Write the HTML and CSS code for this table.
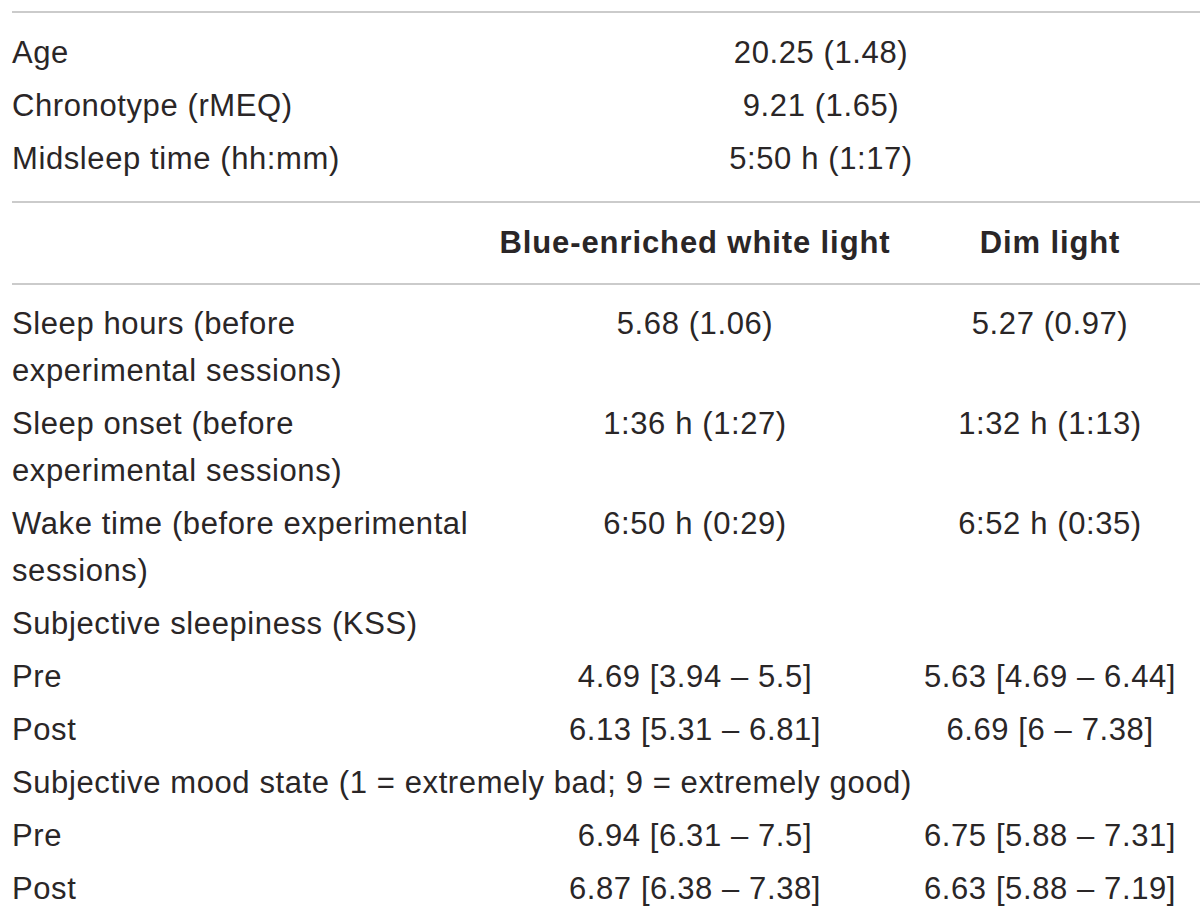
FILE: index.html
```html
<!DOCTYPE html>
<html lang="en">
<head>
    <meta charset="UTF-8">
    <meta name="viewport" content="width=device-width, initial-scale=1.0">
    <title>Participant characteristics</title>
    <link rel="stylesheet" href="styles.css">
</head>
<body>
    <table class="data-table">
        <colgroup>
            <col class="col-label">
            <col class="col-blue">
            <col class="col-dim">
        </colgroup>
        <tbody class="summary">
            <tr>
                <td>Age</td>
                <td class="value wide" colspan="2">20.25 (1.48)</td>
            </tr>
            <tr>
                <td>Chronotype (rMEQ)</td>
                <td class="value wide" colspan="2">9.21 (1.65)</td>
            </tr>
            <tr>
                <td>Midsleep time (hh:mm)</td>
                <td class="value wide" colspan="2">5:50 h (1:17)</td>
            </tr>
        </tbody>
        <tbody class="heading">
            <tr>
                <th></th>
                <th>Blue-enriched white light</th>
                <th class="last">Dim light</th>
            </tr>
        </tbody>
        <tbody class="results">
            <tr>
                <td>Sleep hours (before<br>experimental sessions)</td>
                <td class="value">5.68 (1.06)</td>
                <td class="value last">5.27 (0.97)</td>
            </tr>
            <tr>
                <td>Sleep onset (before<br>experimental sessions)</td>
                <td class="value">1:36 h (1:27)</td>
                <td class="value last">1:32 h (1:13)</td>
            </tr>
            <tr>
                <td>Wake time (before experimental<br>sessions)</td>
                <td class="value">6:50 h (0:29)</td>
                <td class="value last">6:52 h (0:35)</td>
            </tr>
            <tr>
                <td colspan="3">Subjective sleepiness (KSS)</td>
            </tr>
            <tr>
                <td>Pre</td>
                <td class="value">4.69 [3.94 – 5.5]</td>
                <td class="value last">5.63 [4.69 – 6.44]</td>
            </tr>
            <tr>
                <td>Post</td>
                <td class="value">6.13 [5.31 – 6.81]</td>
                <td class="value last">6.69 [6 – 7.38]</td>
            </tr>
            <tr>
                <td colspan="3">Subjective mood state (1 = extremely bad; 9 = extremely good)</td>
            </tr>
            <tr>
                <td>Pre</td>
                <td class="value">6.94 [6.31 – 7.5]</td>
                <td class="value last">6.75 [5.88 – 7.31]</td>
            </tr>
            <tr>
                <td>Post</td>
                <td class="value">6.87 [6.38 – 7.38]</td>
                <td class="value last">6.63 [5.88 – 7.19]</td>
            </tr>
        </tbody>
    </table>
</body>
</html>
```

FILE: styles.css
```css
body {
    font-family: "Liberation Sans", Arial, sans-serif;
    background-color: #fff;
    color: #2a2627;
    margin: 0;
    padding: 0;
}
.data-table {
    margin: 11px 0 0 12px;
    width: 1188px;
    border-collapse: collapse;
    table-layout: fixed;
    border-top: 2px solid #cbcbcb;
    font-size: 31px;
    line-height: 47px;
    letter-spacing: 0.6px;
}
.col-label {
    width: 468px;
}
.col-blue {
    width: 430px;
}
.col-dim {
    width: 290px;
}
.data-table td,
.data-table th {
    padding: 3px 0;
    text-align: left;
    vertical-align: top;
    white-space: nowrap;
}
.data-table .value {
    text-align: center;
}
.data-table .last {
    padding-right: 10px;
}
.data-table .wide {
    padding-right: 38px;
}
.summary tr:first-child td {
    padding-top: 16px;
}
.summary tr:last-child td {
    padding-bottom: 19px;
}
.data-table .heading th {
    font-weight: bold;
    letter-spacing: 0.9px;
    text-align: center;
    padding-top: 16px;
    padding-bottom: 17px;
    border-top: 2px solid #cbcbcb;
    border-bottom: 2px solid #cbcbcb;
}
.data-table .results tr:first-child td {
    padding-top: 15px;
}
```
